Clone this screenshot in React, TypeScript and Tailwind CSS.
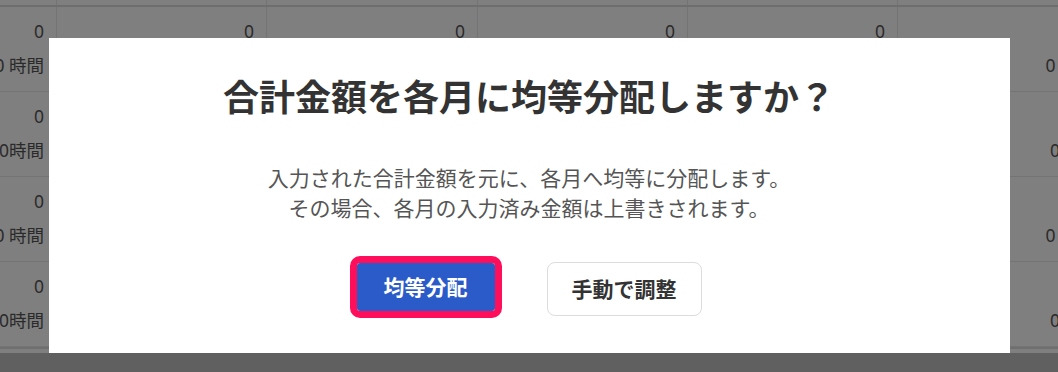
import React from 'react';

// Background table (dimmed behind the dialog)
const columns = ['w-[57px]', 'w-[210px]', 'w-[211px]', 'w-[210px]', 'w-[210px]', 'w-[210px]'];

const units = ['0 時間', '0時間', '0 時間', '0時間'];

function BackgroundTable() {
  return (
    <div className="w-full h-[372px] overflow-hidden bg-white text-[#555] text-[17.5px]" style={{ fontFamily: '"Noto Sans", "Noto Sans CJK JP", sans-serif' }}>
      <div className="flex w-[1108px] h-[7px] border-b-2 border-[#dcdcdc]">
        {columns.map((w, i) => (
          <div key={i} className={`${w} shrink-0 border-r border-[#e8e8e8]`} />
        ))}
      </div>
      {units.map((unit, r) => (
        <div key={r} className="flex w-[1108px] h-[85px] border-b border-[#e8e8e8]">
          {columns.map((w, i) => (
            <div key={i} className={`${w} shrink-0 border-r border-[#e8e8e8] flex flex-col items-end pr-[12px] pt-[12px]`}>
              <span className="leading-[24px] whitespace-nowrap">0</span>
              <span className="leading-[24px] whitespace-nowrap mt-[10px]">{unit}</span>
            </div>
          ))}
        </div>
      ))}
      <div className="h-[2px] bg-[#dedede]" />
      <div className="h-[4px] bg-white" />
      <div className="h-full bg-[#c0c0c0]" />
    </div>
  );
}

export default function App() {
  return (
    <div className="relative w-[1058px] h-[372px] overflow-hidden">
      <BackgroundTable />
      <div className="absolute inset-0 bg-black/50 flex justify-center pt-[38px]">
        <div
          className="w-[961px] h-[315px] bg-white flex flex-col items-center pt-[40px]"
          style={{ fontFamily: '"Noto Sans CJK JP", "Noto Sans", sans-serif' }}
        >
          <h2 className="text-[36px] leading-[35px] font-bold text-[#333]">合計金額を各月に均等分配しますか？</h2>
          <div className="mt-[49px] text-[21px] leading-[30px] text-[#555] text-center">
            <p>入力された合計金額を元に、各月へ均等に分配します。</p>
            <p>その場合、各月の入力済み金額は上書きされます。</p>
          </div>
          <div className="mt-[40px] flex items-start gap-[52px]">
            <button className="mt-px w-[138px] h-[48px] rounded-[3px] bg-[#2a5bc8] text-white text-[21px] font-bold outline-[7px] outline-[#ff0f5b]">
              均等分配
            </button>
            <button className="w-[155px] h-[54px] rounded-[8px] border border-[#dcdcdc] bg-white text-[#333] text-[21px] font-bold">
              手動で調整
            </button>
          </div>
        </div>
      </div>
    </div>
  );
}
